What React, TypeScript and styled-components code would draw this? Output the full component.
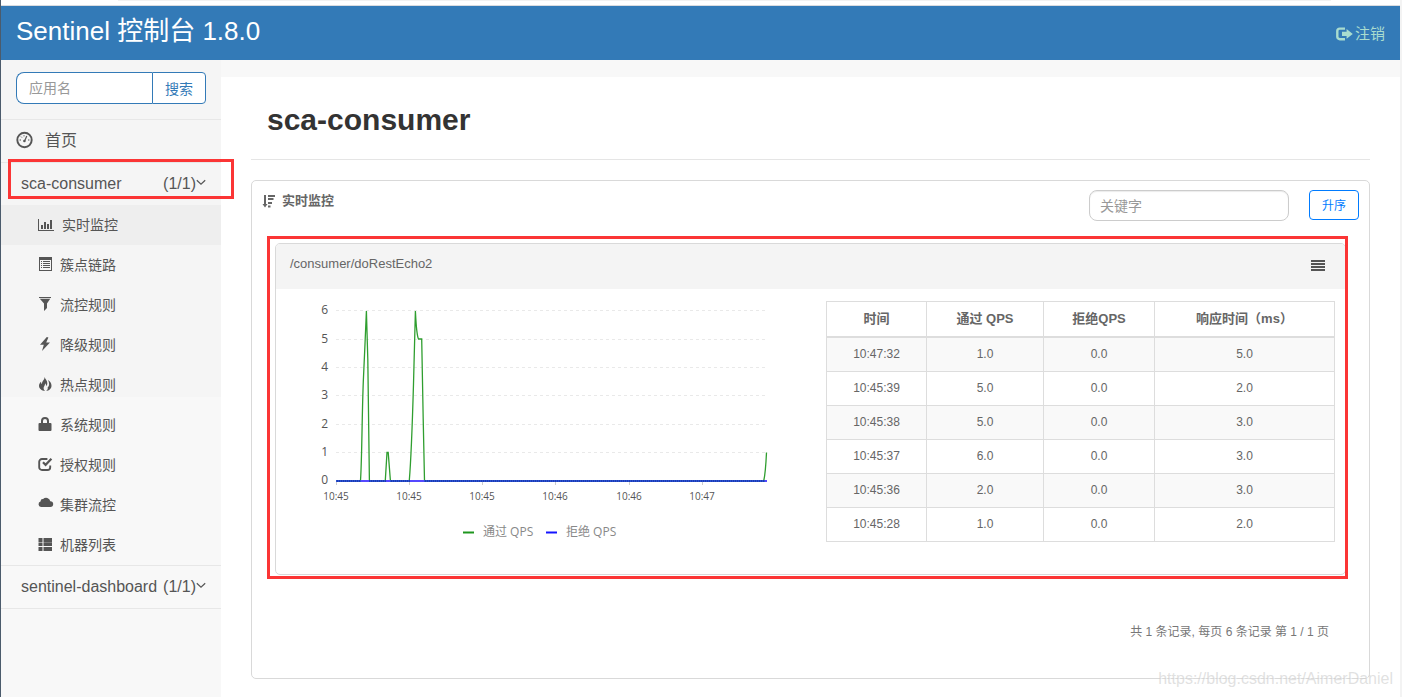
import React from "react";
import styled, { createGlobalStyle } from "styled-components";

const GlobalStyle = createGlobalStyle`
  *, *::before, *::after { box-sizing: border-box; }
  body {
    margin: 0;
    background: #fff;
    color: #555;
    font-family: "Liberation Sans", "Noto Sans CJK SC", sans-serif;
    font-size: 14px;
    line-height: 20px;
  }
  input, button { font-family: inherit; }
  a { color: inherit; text-decoration: none; }
`;

const Frame = styled.div`
  position: relative;
  display: flex;
  flex-direction: column;
  min-height: 100vh;
  border-left: 1px solid #4b5b6c;
  border-right: 2px solid #f3f3f3;
  background: #f8f8f8;
`;

const BrowserEdge = styled.div`
  height: 6px;
  padding: 0 69px 0 117px;
  background: #fff;
  border-bottom: 1px solid #dadce0;

  &::before {
    content: "";
    display: block;
    height: 1px;
    background: #f1f1f1;
  }
`;

const Header = styled.header`
  display: flex;
  align-items: center;
  justify-content: space-between;
  height: 54px;
  padding: 0 15px;
  background: #337ab7;
`;

const Brand = styled.a`
  padding-bottom: 4px;
  color: #fff;
  font-size: 26px;
  line-height: 36px;
`;

const Logout = styled.a`
  display: flex;
  align-items: center;
  gap: 2px;
  padding-top: 2px;
  color: #a9dccf;
  font-size: 15px;
`;

const Columns = styled.div`
  display: flex;
  flex: 1;
`;

const Sidebar = styled.nav`
  flex: 0 0 220px;
  min-width: 0;
  background: linear-gradient(#f5f5f5 337px, #f8f8f8 337px);
`;

const SearchForm = styled.form`
  display: flex;
  padding: 12px 15px 15px;
`;

const SearchInput = styled.input`
  flex: 1;
  width: 100%;
  min-width: 0;
  height: 32px;
  padding: 0 12px;
  border: 1px solid #337ab7;
  border-right: 0;
  border-radius: 8px 0 0 8px;
  background: #fff;
  font-size: 14px;
  &::placeholder { color: #999; opacity: 1; }
`;

const SearchButton = styled.button`
  flex: 0 0 54px;
  height: 32px;
  padding: 0;
  border: 1px solid #337ab7;
  border-radius: 0 4px 4px 0;
  background: #fff;
  color: #337ab7;
  font-size: 14px;
`;

const NavList = styled.ul`
  margin: 0;
  padding: 0;
  list-style: none;
`;

const NavItem = styled.li`
  position: relative;
  border-top: 1px solid #e7e7e7;
  &:last-child { border-bottom: 1px solid #e7e7e7; }
`;

const NavLink = styled.a<{ $home?: boolean }>`
  display: flex;
  align-items: center;
  gap: ${(p) => (p.$home ? 12 : 0)}px;
  height: 42px;
  padding: 0 15px 0 ${(p) => (p.$home ? 15 : 20)}px;
  color: #555;
  font-size: 16px;
`;

const AppCount = styled.span`
  margin-left: auto;
`;

const SubLink = styled.a<{ $active?: boolean }>`
  display: flex;
  align-items: center;
  gap: 8px;
  height: 40px;
  padding-left: 37px;
  background: ${(p) => (p.$active ? "#eee" : "transparent")};
  color: #555;
  font-size: 14px;
`;

const Marker = styled.div<{ $t: number; $r: number; $b: number; $l: number }>`
  position: absolute;
  top: ${(p) => p.$t}px;
  right: ${(p) => p.$r}px;
  bottom: ${(p) => p.$b}px;
  left: ${(p) => p.$l}px;
  z-index: 2;
  border: 3px solid #fb3535;
  pointer-events: none;
`;

const Main = styled.main`
  flex: 1;
  min-width: 0;
  margin-top: 17px;
  padding: 0 30px 18px;
  background: #fff;
`;

const PageTitle = styled.h1`
  margin: 0 0 20px;
  padding: 26px 16px 22px;
  border-bottom: 1px solid #e5e5e5;
  color: #333;
  font-size: 30px;
  line-height: 34px;
`;

const Panel = styled.section`
  border: 1px solid #d9d9d9;
  border-radius: 5px;
`;

const PanelHead = styled.div`
  display: flex;
  align-items: flex-start;
  gap: 20px;
  padding: 9px 10px 22px;
`;

const PanelTitle = styled.h2`
  display: flex;
  align-items: center;
  gap: 7px;
  margin: 0 auto 0 0;
  color: #666;
  font-size: 13px;
  line-height: 22px;
`;

const KeywordInput = styled.input`
  width: 200px;
  height: 31px;
  padding: 0 10px;
  border: 1px solid #ccc;
  border-radius: 8px;
  box-shadow: inset 0 1px 1px rgba(0, 0, 0, 0.08);
  font-size: 14px;
  &::placeholder { color: #999; opacity: 1; }
`;

const SortButton = styled.button`
  width: 50px;
  height: 30px;
  padding: 0 0 2px;
  border: 1px solid #007bff;
  border-radius: 4px;
  background: #fff;
  color: #007bff;
  font-size: 12px;
`;

const Card = styled.article`
  position: relative;
  margin: 0 23px;
  border: 1px solid #d9d9d9;
  border-radius: 5px;
`;

const CardHead = styled.div`
  display: flex;
  align-items: center;
  justify-content: space-between;
  height: 45px;
  padding: 0 20px 0 14px;
  border-radius: 4px 4px 0 0;
  background: #f4f4f4;
`;

const CardTitle = styled.h3`
  margin: 0;
  padding-bottom: 6px;
  color: #666;
  font-size: 13px;
  font-weight: 400;
`;

const MenuButton = styled.button`
  display: flex;
  width: 14px;
  padding: 0 0 2px;
  border: 0;
  background: none;
  color: #555;
`;

const CardBody = styled.div`
  display: grid;
  grid-template-columns: minmax(0, 550fr) minmax(0, 509fr);
  align-items: start;
  padding-right: 10px;
`;

const ChartSvg = styled.svg`
  display: block;
  width: 100%;
  font-family: "Open Sans", "Noto Sans CJK SC", sans-serif;
`;

const MetricTable = styled.table`
  width: 100%;
  margin-top: 12px;
  border-collapse: collapse;
  table-layout: fixed;
  color: #666;
  text-align: center;
`;

const HeadCell = styled.th<{ $w?: number }>`
  width: ${(p) => (p.$w ? `${p.$w}px` : "auto")};
  height: 35px;
  padding: 0;
  border: 1px solid #ddd;
  border-bottom-width: 2px;
  font-size: 13px;
`;

const Cell = styled.td`
  height: 34px;
  padding: 0 0 1px;
  border: 1px solid #ddd;
  font-size: 12px;
`;

const Row = styled.tr`
  &:nth-child(odd) { background: #f9f9f9; }
  &:first-child ${Cell} { height: 35px; }
`;

const Pager = styled.p`
  margin: 0;
  padding: 47px 40px 36px;
  color: #777;
  font-size: 12px;
  text-align: right;
`;

const Watermark = styled.div`
  position: absolute;
  right: 7px;
  bottom: 8px;
  color: rgba(200, 200, 200, 0.55);
  font-size: 16px;
  text-shadow: 1px 1px 1px rgba(255, 255, 255, 0.8);
`;

const Glyph = ({ w = 14, children }: { w?: number; children: React.ReactNode }) => (
  <svg width={w} height={14} viewBox={`0 1 ${w} 14`} overflow="visible" fill="currentColor" aria-hidden="true">
    {children}
  </svg>
);

const icons = {
  chart: (
    <Glyph w={16}>
      <path d="M0 2h1v11h15v1H0zM3 8h2v4H3zM6 5h2v7H6zM9 7h2v5H9zM12 3h2v9h-2z" />
    </Glyph>
  ),
  list: (
    <Glyph>
      <path
        fillRule="evenodd"
        d="M1 0h13v14H1zM2 3V13h11V3zM3 4h1v1H3zM5 4h7v1H5zM3 6h1v1H3zM5 6h7v1H5zM3 8h1v1H3zM5 8h7v1H5zM3 10h1v1H3zM5 10h7v1H5z"
      />
    </Glyph>
  ),
  filter: (
    <Glyph>
      <path d="M1 0h12v1H1zM1.800 1.800h10.400L9 6.600V11L6 14V6.600z" />
    </Glyph>
  ),
  flash: (
    <Glyph>
      <path d="M8.800 0 2 7.800h3.800L4 14l8-8.400H8.200L10.400.6z" />
    </Glyph>
  ),
  fire: (
    <Glyph>
      <path d="M6.600 0c.5 2 2.700 3.400 2.700 6.300 0 1.200-.5 2.200-.9 2.900-.2-1.300-.7-2.300-1.300-2.900.1 2.300-1.500 3.100-1.500 4.800 0 1.200.6 2.300 1.400 2.900C3.600 13.500 1 11.700 1 8.700c0-1.800 1-2.900 2-4 .1 1.200.4 1.900 1 2.400C3.700 4.200 6.700 3 6.600 0z" />
      <path d="M10.100 3c2.200 1.500 3.400 3.200 3.400 5.700 0 2.800-2.200 4.900-5.500 5.300 1.600-1 2-2.200 1.700-3.700 1-.6 1.300-1.600 1.400-2.700.1-1.500-.4-3-1-4.600z" />
    </Glyph>
  ),
  lock: (
    <Glyph>
      <path d="M3 6V4a4 4 0 0 1 8 0v2h1.500q1 0 1 1v6q0 1-1 1h-11q-1 0-1-1V7q0-1 1-1zM5 6h4V4a2 2 0 0 0-4 0z" />
    </Glyph>
  ),
  check: (
    <Glyph>
      <path
        d="M9.400 2H4A2.800 2.800 0 0 0 1.200 4.800v5.400A2.800 2.800 0 0 0 4 13h5.400a2.800 2.800 0 0 0 2.800-2.800V8.600"
        fill="none"
        stroke="currentColor"
        strokeWidth="1.900"
      />
      <path d="m4.200 6 1.500-1.500 1.900 1.800L12.600 1l1.600 1.500L7.600 9.400z" />
    </Glyph>
  ),
  cloud: (
    <Glyph>
      <path d="M3 10A2.900 2.900 0 0 1 2.500 4.400 2.400 2.400 0 0 1 5.100 2.100 4.200 4.200 0 0 1 12.300 4.200 2.900 2.900 0 0 1 12.300 10z" />
    </Glyph>
  ),
  thList: (
    <Glyph>
      <path d="M.5 1h4v4h-4zM5.500 1H14v4H5.500zM.5 5.500h4V9h-4zM5.500 5.300H14V9H5.500zM.5 10h4v4h-4zM5.500 10H14v4H5.500z" />
    </Glyph>
  ),
};

const Dashboard = () => (
  <svg width="17" height="17" viewBox="0 2 17 17" overflow="visible" fill="none" stroke="currentColor" aria-hidden="true">
    <circle cx="8.500" cy="9" r="7.200" strokeWidth="1.900" />
    <path d="m10.800 5-2 4.600" strokeWidth="1.200" />
    <circle cx="8.400" cy="10" r="1.300" fill="currentColor" stroke="none" />
    <path d="M3.600 9h1.400M12 9h1.400M5 5.600l.9.900M8 4.200v1.200" />
  </svg>
);

const Chevron = () => (
  <svg width="10" height="8" viewBox="0 1 10 8" overflow="visible" fill="none" stroke="currentColor" strokeWidth="1.200" aria-hidden="true">
    <path d="m.8 1.200 4.200 4 4.200-4" />
  </svg>
);

const LogoutIcon = () => (
  <svg width="17" height="14" viewBox="0 0 17 14" fill="currentColor" aria-hidden="true">
    <path d="M9 1.600H3.800a2.500 2.500 0 0 0-2.500 2.500v5.600a2.500 2.500 0 0 0 2.500 2.500H9" fill="none" stroke="currentColor" strokeWidth="2.400" />
    <path d="M10.600 2 16.800 6.900l-6.200 4.900V9H6V4.800h4.600z" />
  </svg>
);

const SortIcon = () => (
  <svg width="13" height="14" viewBox="0 0 13 14" fill="currentColor" aria-hidden="true">
    <path d="M2 1h2v9h1.500L3 13.500.5 10H2zM6 1h7v2H6zM6 4h5.500v2H6zM6 8h4v2H6zM6 11.500h2.500v2H6z" />
  </svg>
);

const menu = [
  { icon: icons.chart, label: "实时监控" },
  { icon: icons.list, label: "簇点链路" },
  { icon: icons.filter, label: "流控规则" },
  { icon: icons.flash, label: "降级规则" },
  { icon: icons.fire, label: "热点规则" },
  { icon: icons.lock, label: "系统规则" },
  { icon: icons.check, label: "授权规则" },
  { icon: icons.cloud, label: "集群流控" },
  { icon: icons.thList, label: "机器列表" },
];

const metrics = [
  ["10:47:32", "1.0", "0.0", "5.0"],
  ["10:45:39", "5.0", "0.0", "2.0"],
  ["10:45:38", "5.0", "0.0", "3.0"],
  ["10:45:37", "6.0", "0.0", "3.0"],
  ["10:45:36", "2.0", "0.0", "3.0"],
  ["10:45:28", "1.0", "0.0", "2.0"],
];

const timeTicks = ["10:45", "10:45", "10:45", "10:46", "10:46", "10:47"];
const levelY = [192, 164, 136, 107, 79, 51, 22];

const QpsChart = () => (
  <ChartSvg viewBox="0 0 550 285" role="img" aria-label="QPS">
    {levelY.map((y, level) => (
      <g key={level}>
        {level > 0 && <path d={`M60 ${y - 0.5}H491`} stroke="#e9e9e9" strokeDasharray="3 3" />}
        <text x="52" y={y + 3} textAnchor="end" fontSize="12" fill="#555">
          {level}
        </text>
      </g>
    ))}
    {timeTicks.map((label, i) => {
      const x = 60 + Math.floor(i * 73.3);
      return (
        <g key={i}>
          <path d={`M${x + 0.5} 192v4`} stroke="#ccc" />
          <text x={x} y="211" textAnchor="middle" fontSize="10" fill="#555">
            {label}
          </text>
        </g>
      );
    })}
    <g fill="none" stroke="#2f9e2f" strokeWidth="1.300">
      <path d="M84.500 191.500C86 170 86 120 87.500 88L89 55 90.400 22 91.800 70 93.400 191.500" />
      <path d="M109.300 191.500 111 163.500h1.200l2.200 28" />
      <path d="M133.300 191.500C135.500 165 136.500 130 137.500 95L139.400 22C140 34 140.500 46 142.500 50h3.200l1.500 80 1.300 61.500" />
      <path d="M487.800 191.500C489.500 184 490 174 490.500 163.500" />
    </g>
    <path d="M60 192H491" stroke="#1b3cb2" strokeWidth="2" />
    <path d="M60 192H491" stroke="#2b50d2" strokeWidth="2" strokeDasharray="1 1" />
    <path d="M85 192h8M110 192h4M134 192h14M489 192h2" stroke="#5548ff" strokeWidth="2" />
    <path d="M187 243.500h11" stroke="#1f961f" strokeWidth="2" />
    <path d="M270 243.500h11" stroke="#1414ff" strokeWidth="2" />
    <g fontSize="12" fill="#888">
      <text x="207" y="247">通过 QPS</text>
      <text x="290" y="247">拒绝 QPS</text>
    </g>
  </ChartSvg>
);

export default function App() {
  return (
    <Frame>
      <GlobalStyle />
      <BrowserEdge />
      <Header>
        <Brand href="#">Sentinel 控制台 1.8.0</Brand>
        <Logout href="#">
          <LogoutIcon />
          注销
        </Logout>
      </Header>
      <Columns>
        <Sidebar>
          <SearchForm onSubmit={(e) => e.preventDefault()}>
            <SearchInput type="text" placeholder="应用名" aria-label="应用名" />
            <SearchButton type="submit">搜索</SearchButton>
          </SearchForm>
          <NavList>
            <NavItem>
              <NavLink href="#" $home>
                <Dashboard />
                首页
              </NavLink>
            </NavItem>
            <NavItem>
              <NavLink href="#">
                sca-consumer
                <AppCount>(1/1)</AppCount>
                <Chevron />
              </NavLink>
              <NavList>
                {menu.map((item, i) => (
                  <li key={item.label}>
                    <SubLink href="#" $active={i === 0}>
                      {item.icon}
                      {item.label}
                    </SubLink>
                  </li>
                ))}
              </NavList>
              <Marker $t={-4} $r={-13} $b={366} $l={7} />
            </NavItem>
            <NavItem>
              <NavLink href="#">
                sentinel-dashboard
                <AppCount>(1/1)</AppCount>
                <Chevron />
              </NavLink>
            </NavItem>
          </NavList>
        </Sidebar>
        <Main>
          <PageTitle>sca-consumer</PageTitle>
          <Panel>
            <PanelHead>
              <PanelTitle>
                <SortIcon />
                实时监控
              </PanelTitle>
              <KeywordInput type="text" placeholder="关键字" aria-label="关键字" />
              <SortButton type="button">升序</SortButton>
            </PanelHead>
            <Card>
              <CardHead>
                <CardTitle>/consumer/doRestEcho2</CardTitle>
                <MenuButton type="button" aria-label="菜单">
                  <svg width="14" height="12" viewBox="0 0 14 12" fill="currentColor" aria-hidden="true">
                    <path d="M0 0h14v2H0zM0 3h14v2H0zM0 6h14v2H0zM0 9h14v2H0z" />
                  </svg>
                </MenuButton>
              </CardHead>
              <CardBody>
                <QpsChart />
                <MetricTable>
                  <thead>
                    <tr>
                      <HeadCell $w={100}>时间</HeadCell>
                      <HeadCell $w={117}>通过 QPS</HeadCell>
                      <HeadCell $w={111}>拒绝QPS</HeadCell>
                      <HeadCell>响应时间（ms）</HeadCell>
                    </tr>
                  </thead>
                  <tbody>
                    {metrics.map((row) => (
                      <Row key={row[0]}>
                        {row.map((value, i) => (
                          <Cell key={i}>{value}</Cell>
                        ))}
                      </Row>
                    ))}
                  </tbody>
                </MetricTable>
              </CardBody>
              <Marker $t={-8} $r={-3} $b={-5} $l={-9} />
            </Card>
            <Pager>共 1 条记录, 每页 6 条记录 第 1 / 1 页</Pager>
          </Panel>
        </Main>
      </Columns>
      <Watermark>https://blog.csdn.net/AimerDaniel</Watermark>
    </Frame>
  );
}
